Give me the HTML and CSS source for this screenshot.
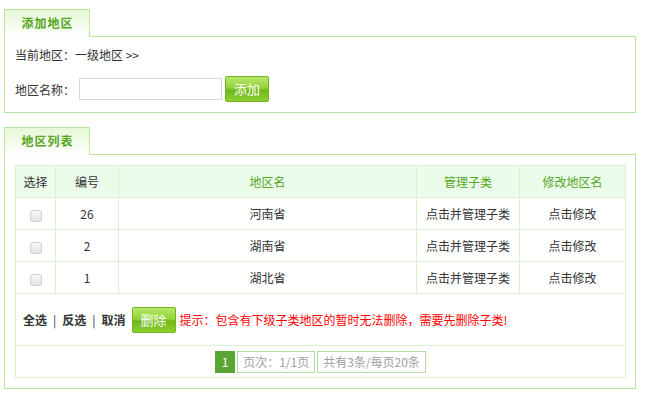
FILE: index.html
```html
<!DOCTYPE html>
<html lang="zh">
<head>
<meta charset="utf-8">
<title>地区管理</title>
<link rel="stylesheet" href="styles.css">
</head>
<body>
<div class="panel panel-add">
  <div class="panel-head">
    <div class="tab">添加地区</div>
    <div class="head-fill"></div>
  </div>
  <div class="panel-body add-body">
    <div class="line crumb">当前地区：一级地区&nbsp;&gt;&gt;</div>
    <div class="line form-line">
      <span class="label">地区名称：</span>
      <input class="text-input" type="text">
      <button class="btn" type="button">添加</button>
    </div>
  </div>
</div>

<div class="panel panel-list">
  <div class="panel-head">
    <div class="tab">地区列表</div>
    <div class="head-fill"></div>
  </div>
  <div class="panel-body list-body">
    <table class="grid">
      <colgroup>
        <col class="c1"><col class="c2"><col class="c3"><col class="c4"><col class="c5">
      </colgroup>
      <thead>
        <tr>
          <th>选择</th>
          <th>编号</th>
          <th class="hl">地区名</th>
          <th class="hl">管理子类</th>
          <th class="hl">修改地区名</th>
        </tr>
      </thead>
      <tbody>
        <tr>
          <td><span class="check"></span></td>
          <td>26</td>
          <td>河南省</td>
          <td>点击并管理子类</td>
          <td>点击修改</td>
        </tr>
        <tr>
          <td><span class="check"></span></td>
          <td>2</td>
          <td>湖南省</td>
          <td>点击并管理子类</td>
          <td>点击修改</td>
        </tr>
        <tr>
          <td><span class="check"></span></td>
          <td>1</td>
          <td>湖北省</td>
          <td>点击并管理子类</td>
          <td>点击修改</td>
        </tr>
        <tr class="actions">
          <td colspan="5">
            <div class="action-line">
              <span class="op">全选</span><span class="sep">|</span><span class="op">反选</span><span class="sep">|</span><span class="op">取消</span>
              <button class="btn btn-del" type="button">删除</button>
              <span class="tip">提示：包含有下级子类地区的暂时无法删除，需要先删除子类!</span>
            </div>
          </td>
        </tr>
        <tr class="pager-row">
          <td colspan="5">
            <div class="pager">
              <span class="pg cur">1</span>
              <span class="pg info">页次：1/1页</span>
              <span class="pg info">共有3条/每页20条</span>
            </div>
          </td>
        </tr>
      </tbody>
    </table>
  </div>
</div>
</body>
</html>
```

FILE: styles.css
```css
* { box-sizing: border-box; }
html, body {
  margin: 0;
  padding: 0;
  background: #fff;
}
body {
  font-family: "Noto Sans CJK SC", "Liberation Sans", sans-serif;
  font-size: 12px;
  color: #333;
  padding: 9px 0 0 4px;
}
.panel {
  width: 632px;
}
.panel-list {
  margin-top: 14px;
}
.panel-head {
  display: flex;
  height: 28px;
}
.tab {
  width: 86px;
  height: 28px;
  border: 1px solid #bce5a0;
  border-bottom: none;
  background: linear-gradient(#e6f8d6, #ffffff);
  color: #55a51e;
  font-weight: bold;
  font-size: 12px;
  line-height: 26px;
  text-align: center;
  letter-spacing: 1px;
  text-indent: 1px;
}
.head-fill {
  flex: 1;
  border-bottom: 1px solid #bce5a0;
}
.panel-body {
  border: 1px solid #bce5a0;
  border-top: none;
}
.add-body {
  padding: 8px 10px 10px 10px;
}
.line {
  display: flex;
  align-items: center;
}
.crumb {
  height: 20px;
  line-height: 20px;
}
.form-line {
  margin-top: 11px;
  height: 26px;
}
.label {
  width: 64px;
}
.text-input {
  width: 143px;
  height: 22px;
  border: 1px solid #d8d8d8;
  margin: 0;
  padding: 0 3px;
  font: inherit;
}
.btn {
  margin: 0 0 0 3px;
  width: 44px;
  height: 26px;
  padding: 0;
  border: 1px solid #73b41e;
  border-radius: 2px;
  background: linear-gradient(#b6e86a 0%, #94d43a 45%, #6fb81a 55%, #8dd032 100%);
  color: #fff;
  font: inherit;
  font-size: 13px;
  line-height: 24px;
  cursor: pointer;
}
.list-body {
  padding: 10px 10px 10px 10px;
}
.grid {
  width: 610px;
  border-collapse: collapse;
  table-layout: fixed;
}
.c1 { width: 40px; }
.c2 { width: 63px; }
.c3 { width: 298px; }
.c4 { width: 103px; }
.c5 { width: 106px; }
.grid th, .grid td {
  border: 1px solid #dcf0d2;
  height: 32px;
  padding: 0;
  text-align: center;
  font-weight: normal;
  font-size: 12px;
}
.grid thead th {
  background: #ecfceb;
  color: #333;
}
.grid thead th.hl {
  color: #55a51e;
}
.check {
  display: inline-block;
  width: 12px;
  height: 12px;
  border: 1px solid #cfcfcf;
  border-radius: 3px;
  background: linear-gradient(#f6f6f6, #e4e4e4);
  vertical-align: middle;
}
.grid tr.actions td {
  height: 52px;
  text-align: left;
  padding-left: 7px;
}
.action-line {
  display: flex;
  align-items: center;
}
.op {
  font-weight: bold;
  color: #333;
}
.sep {
  margin: 0 6px;
  color: #333;
}
.btn-del {
  margin-left: 6px;
}
.tip {
  margin-left: 4px;
  color: #ff0000;
}
.pager {
  display: flex;
  justify-content: center;
  gap: 2px;
}
.pg {
  display: inline-block;
  height: 22px;
  line-height: 20px;
  border: 1px solid #b5d9a6;
  padding: 0 5px;
  color: #999;
}
.pg.cur {
  width: 20px;
  padding: 0;
  background: #5ba535;
  border-color: #5ba535;
  color: #fff;
}
.pg.info {
  color: #a0a0a0;
}
```
